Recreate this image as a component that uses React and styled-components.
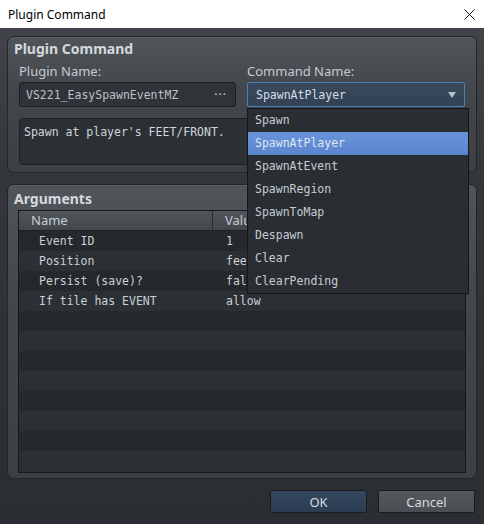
import React from "react";
import styled, { createGlobalStyle } from "styled-components";

const Global = createGlobalStyle`
  html, body { margin: 0; padding: 0; background: #2d3135; }
  #root { width: 484px; height: 524px; overflow: hidden; }
  * { box-sizing: border-box; }
`;

const SANS = `"Noto Sans", "Open Sans", sans-serif`;
const MONO = `"DejaVu Sans Mono", "Liberation Mono", monospace`;

const Window = styled.div`
  width: 484px;
  height: 524px;
  display: flex;
  flex-direction: column;
  font-family: ${SANS};
`;

const TitleBar = styled.div`
  height: 28px;
  background: #ffffff;
  display: flex;
  align-items: center;
  justify-content: space-between;
  padding: 0 9px 0 8px;
  font-size: 12px;
  color: #000;
`;

const CloseBtn = styled.svg`
  width: 11px;
  height: 11px;
  display: block;
`;

const Body = styled.div`
  flex: 1;
  display: flex;
  flex-direction: column;
  gap: 11px;
  padding: 8px 7px 0 7px;
  background: linear-gradient(#414549 0px, #33373b 150px, #2c3034 400px, #2b2f33 100%);
`;

const Group = styled.div`
  position: relative;
  height: ${(p) => p.$h}px;
  flex-shrink: 0;
  border: 1px solid #232629;
  border-radius: 7px;
  background: linear-gradient(#50555a 0%, #43474b 40%, #3c4044 100%);
  box-shadow: inset 0 1px 0 rgba(255, 255, 255, 0.06);
  padding: ${(p) => p.$pad};
  display: flex;
  flex-direction: column;
`;

const GroupTitle = styled.div`
  font-size: 14px;
  font-weight: 700;
  line-height: 16px;
  color: #d4d9de;
  margin-left: -5px;
`;

const FieldRow = styled.div`
  display: flex;
  gap: 11px;
  margin-top: 6px;
`;

const Field = styled.div`
  width: ${(p) => p.$w}px;
  display: flex;
  flex-direction: column;
`;

const Label = styled.div`
  font-size: 13px;
  line-height: 17px;
  color: #c3cbd3;
  height: 19px;
`;

const InputBox = styled.div`
  height: 25px;
  border: 1px solid #1c1f22;
  border-radius: 3px;
  background: #303438;
  display: flex;
  align-items: center;
  justify-content: space-between;
  padding: 0 8px 0 6px;
  font-family: ${MONO};
  font-size: 11.5px;
  color: #b9c1c9;
`;

const Dots = styled.span`
  font-family: ${SANS};
  font-size: 12px;
  letter-spacing: 1px;
  color: #c8d0d8;
`;

const ComboWrap = styled.div`
  position: relative;
  height: 25px;
`;

const Combo = styled.div`
  height: 25px;
  border: 1px solid #4d80b8;
  border-radius: 2px;
  background: linear-gradient(#3a4a5e, #324154);
  display: flex;
  align-items: center;
  justify-content: space-between;
  padding: 0 8px 0 8px;
  font-family: ${MONO};
  font-size: 11.5px;
  color: #d6dde4;
`;

const Arrow = styled.svg`
  width: 8px;
  height: 6px;
  display: block;
`;

const List = styled.div`
  position: absolute;
  top: 26px;
  left: 0;
  width: 222px;
  background: #2a2e32;
  border: 1px solid #141618;
  z-index: 5;
  display: flex;
  flex-direction: column;
`;

const Item = styled.div`
  height: 23px;
  line-height: 23px;
  padding-left: 7px;
  font-family: ${MONO};
  font-size: 11.5px;
  color: ${(p) => (p.$sel ? "#dfe7f0" : "#c4ccd4")};
  background: ${(p) => (p.$sel ? "linear-gradient(#6a94da, #5a84cc)" : "transparent")};
`;

const Desc = styled.div`
  margin-top: 11px;
  height: 47px;
  flex-shrink: 0;
  border: 1px solid #1c1f22;
  border-radius: 4px;
  background: #2c3034;
  padding: 5px 4px;
  font-family: ${MONO};
  font-size: 11.5px;
  line-height: 16px;
  color: #cdd5dd;
`;

const Table = styled.div`
  margin-top: 3px;
  margin-left: -1px;
  height: 263px;
  flex-shrink: 0;
  border: 1px solid #16191b;
  background: #2b2f33;
  display: flex;
  flex-direction: column;
  overflow: hidden;
`;

const HeadRow = styled.div`
  height: 20px;
  flex-shrink: 0;
  display: grid;
  grid-template-columns: 194px 1fr;
  background: linear-gradient(#50555a, #43484c);
  border-bottom: 1px solid #1e2124;
`;

const HeadCell = styled.div`
  font-size: 13px;
  line-height: 19px;
  color: #c4ccd4;
  padding-left: 12px;
  border-right: ${(p) => (p.$div ? "1px solid #2a2d30" : "none")};
`;

const Row = styled.div`
  height: 20px;
  flex-shrink: 0;
  display: grid;
  grid-template-columns: 194px 1fr;
  background: ${(p) => (p.$odd ? "#25292c" : "#2c3034")};
  font-family: ${MONO};
  font-size: 11.5px;
  line-height: 20px;
  color: #c8d0d8;
`;

const Cell = styled.div`
  padding-left: ${(p) => p.$pl}px;
  white-space: nowrap;
`;

const Buttons = styled.div`
  display: flex;
  justify-content: flex-end;
  gap: 11px;
  padding-right: 2px;
`;

const Button = styled.div`
  width: 97px;
  height: 23px;
  border: 1px solid #1a1d20;
  border-radius: 2px;
  background: ${(p) =>
    p.$primary ? "linear-gradient(#34485f, #2c3d52)" : "linear-gradient(#53585c, #4a4e52)"};
  color: #d4dae0;
  font-size: 13px;
  display: flex;
  align-items: center;
  justify-content: center;
`;

const commands = [
  "Spawn",
  "SpawnAtPlayer",
  "SpawnAtEvent",
  "SpawnRegion",
  "SpawnToMap",
  "Despawn",
  "Clear",
  "ClearPending",
];

const args = [
  ["Event ID", "1"],
  ["Position", "feet"],
  ["Persist (save)?", "false"],
  ["If tile has EVENT", "allow"],
];

export default function App() {
  const rows = [];
  for (let i = 0; i < 12; i++) {
    const a = args[i];
    rows.push(
      <Row key={i} $odd={i % 2 === 0}>
        <Cell $pl={20}>{a ? a[0] : ""}</Cell>
        <Cell $pl={13}>{a ? a[1] : ""}</Cell>
      </Row>
    );
  }
  return (
    <>
      <Global />
      <Window>
        <TitleBar>
          <span>Plugin Command</span>
          <CloseBtn viewBox="0 0 11 11">
            <path d="M0.5 0.5 L10.5 10.5 M10.5 0.5 L0.5 10.5" stroke="#111" strokeWidth="1" />
          </CloseBtn>
        </TitleBar>
        <Body>
          <Group $h={137} $pad="4px 11px 7px 11px">
            <GroupTitle>Plugin Command</GroupTitle>
            <FieldRow>
              <Field $w={218}>
                <Label>Plugin Name:</Label>
                <InputBox>
                  <span>VS221_EasySpawnEventMZ</span>
                  <Dots>···</Dots>
                </InputBox>
              </Field>
              <Field $w={219}>
                <Label>Command Name:</Label>
                <ComboWrap>
                  <Combo>
                    <span>SpawnAtPlayer</span>
                    <Arrow viewBox="0 0 8 6">
                      <path d="M0 0 H8 L4 6 Z" fill="#b8c0c8" />
                    </Arrow>
                  </Combo>
                  <List>
                    {commands.map((c) => (
                      <Item key={c} $sel={c === "SpawnAtPlayer"}>
                        {c}
                      </Item>
                    ))}
                  </List>
                </ComboWrap>
              </Field>
            </FieldRow>
            <Desc>Spawn at player's FEET/FRONT.</Desc>
          </Group>
          <Group $h={295} $pad="6px 10px 6px 11px">
            <GroupTitle>Arguments</GroupTitle>
            <Table>
              <HeadRow>
                <HeadCell $div>Name</HeadCell>
                <HeadCell>Value</HeadCell>
              </HeadRow>
              {rows}
            </Table>
          </Group>
          <Buttons>
            <Button $primary>OK</Button>
            <Button>Cancel</Button>
          </Buttons>
        </Body>
      </Window>
    </>
  );
}
